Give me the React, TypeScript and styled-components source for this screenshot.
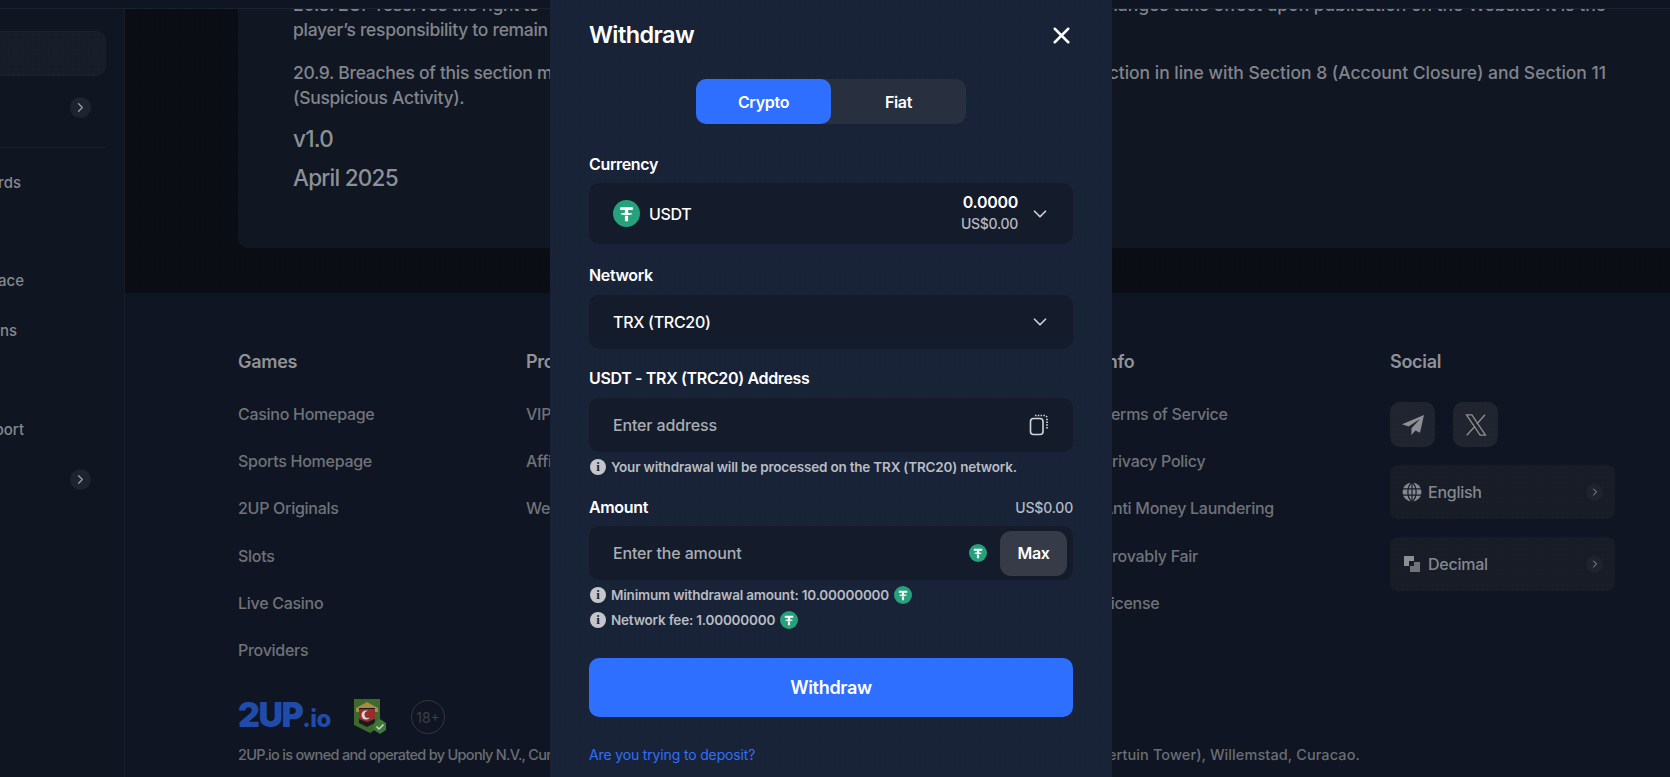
import React from 'react';
import styled, { createGlobalStyle } from 'styled-components';
import { ChevronDown, ChevronRight, X } from 'lucide-react';

const dots = (color: string) =>
  `radial-gradient(${color} 0.6px, transparent 0.8px) 0 0 / 5px 5px`;

const GlobalStyle = createGlobalStyle`
  * {
    box-sizing: border-box;
  }

  html,
  body {
    margin: 0;
    height: 100%;
    overflow: hidden;
    background: #0a0d14;
  }

  body {
    font-family: Inter, 'Noto Sans', 'Liberation Sans', sans-serif;
  }
`;

const PageStyle = styled.div`
  height: 777px;
  display: flex;
  flex-direction: column;
  overflow: hidden;
`;

const TopBar = styled.header`
  flex: 0 0 9px;
  background: #0f1522;
  border-bottom: 1px solid #1a2130;
  position: relative;
  z-index: 1;
`;

const Body = styled.div`
  flex: 1;
  min-height: 0;
  display: flex;
`;

const Sidebar = styled.aside`
  flex: 0 0 125px;
  background: #0f1521;
  border-right: 1px solid #171d2a;
  overflow: hidden;
  display: flex;
  flex-direction: column;
  padding-top: 22px;
`;

const SideButton = styled.div`
  width: 116px;
  height: 45px;
  flex: none;
  margin-left: -10px;
  border-radius: 10px;
  border: 1px solid #1a212d;
  background: ${dots('#1f2632')}, #161c28;
`;

const SideToggleRow = styled.div<{ $mt: number }>`
  height: 21px;
  flex: none;
  margin-top: ${(p) => p.$mt}px;
  padding-right: 33px;
  display: flex;
  justify-content: flex-end;
`;

const CircleChevron = styled.span<{ $size: number }>`
  width: ${(p) => p.$size}px;
  height: ${(p) => p.$size}px;
  flex: none;
  border-radius: 50%;
  background: #1e232d;
  color: #9b9ea5;
  display: flex;
  align-items: center;
  justify-content: center;
`;

const SideDivider = styled.div`
  width: 106px;
  height: 1px;
  flex: none;
  margin-top: 29px;
  background: #171d29;
`;

const SideText = styled.div<{ $end: number; $mt: number }>`
  width: ${(p) => p.$end}px;
  height: 20px;
  flex: none;
  margin-top: ${(p) => p.$mt}px;
  display: flex;
  justify-content: flex-end;
  white-space: nowrap;
  font-size: 15px;
  line-height: 20px;
  font-weight: 500;
  color: #85888e;
`;

const Main = styled.main`
  flex: 1;
  min-width: 0;
  display: flex;
  flex-direction: column;
  overflow: hidden;
`;

const ContentArea = styled.section`
  flex: 0 0 284px;
  padding-left: 113px;
  background: ${dots('#0d1119')}, #0a0d14;
`;

const Card = styled.article`
  height: 256px;
  margin-top: -17px;
  padding: 0 64px 0 55px;
  background: #101622;
  border-radius: 0 0 0 10px;
  overflow: hidden;
  color: #81858c;
`;

const Line = styled.div<{ $mt?: number }>`
  height: 25px;
  margin-top: ${(p) => p.$mt ?? 0}px;
  display: flex;
  justify-content: space-between;
  white-space: nowrap;
  font-size: 17.5px;
  line-height: 25px;
  font-weight: 500;
  letter-spacing: -0.3px;
`;

const LineEnd = styled.span`
  letter-spacing: -0.02px;
`;

const Version = styled.div<{ $mt: number }>`
  height: 30px;
  margin-top: ${(p) => p.$mt}px;
  font-size: 22.5px;
  line-height: 30px;
  font-weight: 500;
  letter-spacing: -0.75px;
  color: #8d9096;
`;

const Footer = styled.footer`
  flex: 1;
  padding: 57px 0 0 113px;
  background: #0f1522;
`;

const Columns = styled.div`
  display: grid;
  grid-template-columns: repeat(4, 288px) 225px;
  height: 320px;
`;

const ColumnTitle = styled.h4`
  margin: 0 0 28px;
  font-size: 18px;
  line-height: 24px;
  font-weight: 600;
  letter-spacing: -0.3px;
  color: #8f9297;
`;

const FooterLink = styled.div`
  height: 47.2px;
  font-size: 16px;
  line-height: 24px;
  font-weight: 500;
  letter-spacing: -0.28px;
  white-space: nowrap;
  color: #6f7379;
`;

const SocialRow = styled.div`
  display: flex;
  gap: 18px;
  margin-bottom: 18px;
`;

const SocialTile = styled.div`
  width: 45px;
  height: 45px;
  border-radius: 10px;
  background: ${dots('#262a34')}, #20242e;
  color: #8c8f93;
  display: flex;
  align-items: center;
  justify-content: center;
`;

const PrefRow = styled.div`
  height: 54px;
  margin-bottom: 18px;
  padding: 0 12px;
  border-radius: 8px;
  background: ${dots('#1c2230')}, #171c27;
  display: flex;
  align-items: center;
  gap: 6px;
  color: #85888e;
  font-size: 16px;
  font-weight: 500;
  letter-spacing: -0.25px;
`;

const PrefLabel = styled.span`
  flex: 1;
`;

const BrandRow = styled.div`
  display: flex;
  align-items: center;
  height: 36px;
  margin-top: 29px;
`;

const BrandLogo = styled.div`
  width: 116px;
  display: flex;
  align-items: baseline;
  color: #1f4bab;
  font-weight: 900;
  font-size: 34px;
  line-height: 36px;
  letter-spacing: -1.5px;

  small {
    font-size: 24px;
    font-weight: 800;
    letter-spacing: -0.5px;
  }
`;

const AgeBadge = styled.div`
  width: 34px;
  height: 34px;
  margin-left: 24px;
  border-radius: 50%;
  border: 1.5px solid #33373f;
  color: #3c4048;
  display: flex;
  align-items: center;
  justify-content: center;
  font-size: 14px;
`;

const LegalText = styled.div`
  margin-top: 8px;
  display: flex;
  width: 1122px;
  justify-content: space-between;
  white-space: nowrap;
  font-size: 14.5px;
  line-height: 24px;
  font-weight: 500;
  letter-spacing: -0.7px;
  color: #6a6e74;
`;

const LegalEnd = styled.span`
  letter-spacing: 0.1px;
`;

const Overlay = styled.div`
  position: fixed;
  inset: 0;
  z-index: 2;
  padding-right: 8px;
  display: flex;
  justify-content: center;
`;

const Modal = styled.div`
  width: 562px;
  height: 777px;
  padding: 0 39px;
  background: ${dots('#1c273e')}, #192338;
  color: #fff;
`;

const ModalHeader = styled.div`
  height: 70px;
  display: flex;
  align-items: center;
  justify-content: space-between;
`;

const ModalTitle = styled.h2`
  margin: 0;
  font-size: 23.5px;
  line-height: 30px;
  font-weight: 600;
  letter-spacing: -0.6px;
`;

const CloseIcon = styled(X)`
  margin-right: -2px;
`;

const Toggle = styled.div`
  width: 270px;
  height: 45px;
  margin: 9px auto 0;
  border-radius: 10px;
  background: #282f3e;
  display: flex;
`;

const ToggleButton = styled.div<{ $active?: boolean }>`
  flex: 1;
  border-radius: 10px;
  background: ${(p) => (p.$active ? '#2f6fff' : 'transparent')};
  display: flex;
  align-items: center;
  justify-content: center;
  font-size: 16px;
  font-weight: 600;
  letter-spacing: -0.3px;
`;

const FieldLabelRow = styled.div<{ $mt: number; $mb?: number }>`
  height: 20px;
  margin-top: ${(p) => p.$mt}px;
  margin-bottom: ${(p) => p.$mb ?? 10}px;
  display: flex;
  align-items: center;
  justify-content: space-between;
  font-size: 16px;
  font-weight: 600;
  letter-spacing: -0.35px;
`;

const LabelValue = styled.span`
  font-size: 14px;
  font-weight: 500;
  letter-spacing: -0.2px;
  color: #b5b9c0;
`;

const FieldBox = styled.div<{ $tall?: boolean }>`
  height: ${(p) => (p.$tall ? 61 : 54)}px;
  padding-left: 24px;
  padding-right: 24px;
  border-radius: 10px;
  background: #141b2a;
  display: flex;
  align-items: center;
  font-size: 16px;
  font-weight: 500;
  letter-spacing: -0.3px;
`;

const AmountBox = styled(FieldBox)`
  padding-right: 6px;
`;

const Grow = styled.span`
  flex: 1;
`;

const Placeholder = styled(Grow)`
  letter-spacing: -0.15px;
  color: #a9adb4;
`;

const CurrencyName = styled(Grow)`
  margin-left: 9px;
`;

const Balance = styled.div`
  margin-right: 11px;
  margin-top: -2px;
  text-align: right;
`;

const BalanceValue = styled.div`
  font-size: 16px;
  line-height: 22px;
  font-weight: 600;
`;

const BalanceFiat = styled.div`
  font-size: 14px;
  line-height: 22px;
  color: #b5b9c0;
`;

const Chevron = styled(ChevronDown)`
  flex: none;
  margin-right: -2px;
  color: #d2d4d8;
`;

const MaxButton = styled.div`
  width: 67px;
  height: 45px;
  margin-left: 13px;
  border-radius: 11px;
  background: #373b47;
  display: flex;
  align-items: center;
  justify-content: center;
  font-size: 16px;
  font-weight: 600;
`;

const Note = styled.div<{ $mt?: number }>`
  height: 25px;
  margin-top: ${(p) => p.$mt ?? 0}px;
  display: flex;
  align-items: center;
  gap: 5px;
  font-size: 13.5px;
  font-weight: 600;
  letter-spacing: -0.2px;
  color: #b8bcc3;
  white-space: nowrap;
`;

const InfoDot = styled.span`
  width: 16px;
  height: 16px;
  margin-left: 1px;
  border-radius: 50%;
  background: #c4c6cb;
  color: #192338;
  display: flex;
  align-items: center;
  justify-content: center;
  font-family: 'Liberation Serif', serif;
  font-size: 13px;
  font-weight: 700;
`;

const SubmitButton = styled.div`
  height: 59px;
  margin-top: 26px;
  border-radius: 10px;
  background: #2f6fff;
  display: flex;
  align-items: center;
  justify-content: center;
  font-size: 18px;
  font-weight: 600;
  letter-spacing: -0.3px;
`;

const DepositLink = styled.a`
  display: block;
  margin-top: 28px;
  font-size: 14px;
  line-height: 20px;
  font-weight: 400;
  letter-spacing: -0.15px;
  color: #2f6fff;
`;

const Tether = ({ size }: { size: number }) => (
  <svg width={size} height={size} viewBox="0 0 32 32" style={{ flex: 'none' }}>
    <circle cx="16" cy="16" r="16" fill="#26a17b" />
    <path
      d="M8.500 8.500h15v3.400h-5.600v3.100c2.900.2 5 .8 5 1.500s-2.100 1.300-5 1.500v7.200h-3.800v-7.200c-2.900-.2-5-.8-5-1.500s2.100-1.300 5-1.500v-3.100H8.500z"
      fill="#fff"
    />
    <path d="M7 16.600c1.500 1.200 5 1.800 9 1.800s7.500-.6 9-1.800" fill="none" stroke="#26a17b" strokeWidth="0.9" />
  </svg>
);

const CopyIcon = () => (
  <svg width="20" height="22" viewBox="0 0 20 22" fill="none" stroke="#d4d6da" style={{ flex: 'none' }}>
    <rect x="1.500" y="4.500" width="12.500" height="16" rx="3" strokeWidth="1.600" />
    <path d="M6 1.500h9.500c1.200 0 2.500 1 2.500 2.500v11" strokeWidth="1.700" strokeDasharray="1.500 1.300" />
  </svg>
);

const TelegramIcon = () => (
  <svg width="24" height="24" viewBox="0 0 24 24" fill="currentColor">
    <path d="M23 2 1 11.300l6.500 2.300L19 6 10.500 15.200 10.400 22l4-4.600 4.600 2.300z" />
  </svg>
);

const XLogo = () => (
  <svg width="24" height="24" viewBox="0 0 24 24" fill="none" stroke="currentColor" strokeWidth="1.300">
    <path d="M2.500 1.800h5.400l13.600 20.400h-5.400zM21 1.800l-8.200 9.200M11 13.300l-8.200 8.900" />
  </svg>
);

const GlobeIcon = () => (
  <svg width="20" height="20" viewBox="0 0 20 20" fill="none" style={{ flex: 'none' }}>
    <circle cx="10" cy="10" r="9.500" fill="#85888e" />
    <path d="M0 6.800h20M0 13.200h20M10 0v20M10 0C4.500 5 4.500 15 10 20M10 0c5.500 5 5.500 15 0 20" stroke="#171c27" strokeWidth="1.200" />
  </svg>
);

const OddsIcon = () => (
  <svg width="18" height="18" viewBox="0 0 18 18" style={{ flex: 'none', marginLeft: 1, marginRight: 1 }}>
    <path d="M1 1h10v5H6v5H1z" fill="#8b8e93" />
    <path d="M7 7h10v10H7z" fill="#6f7277" />
    <path d="M7 7h4v4H7z" fill="#171c27" />
  </svg>
);

const ShieldBadge = () => (
  <svg width="33" height="36" viewBox="0 0 33 36" style={{ flex: 'none' }}>
    <path d="M0 0h26v28l-10 6L0 26z" fill="#3d6a2c" />
    <path d="M13 3 24 9v4H2V9z" fill="#a98a45" />
    <path d="M5 9h16v15l-8 4-8-4z" fill="#1a1a1c" />
    <path d="M5 10h16v10l-8 3-8-3z" fill="#9a2c2c" />
    <circle cx="12" cy="16" r="4.500" fill="#d9d9d9" />
    <circle cx="14" cy="15.500" r="3.500" fill="#9a2c2c" />
    <path d="M32 24v7l-6 4-6-4v-7l6-4z" fill="#3d7a3a" />
    <path d="m22.500 27.500 2.500 2.500 4.500-4.500" fill="none" stroke="#cfd6cf" strokeWidth="1.500" />
  </svg>
);

const games = ['Casino Homepage', 'Sports Homepage', '2UP Originals', 'Slots', 'Live Casino', 'Providers'];
const promos = ['VIP Club', 'Affiliate', 'Welcome Bonus'];
const infoLinks = ['Terms of Service', 'Privacy Policy', 'Anti Money Laundering', 'Provably Fair', 'License'];

const App = () => {
  return (
    <PageStyle>
      <GlobalStyle />
      <TopBar />
      <Body>
        <Sidebar>
          <SideButton />
          <SideToggleRow $mt={21}>
            <CircleChevron $size={21}>
              <ChevronRight size={15} />
            </CircleChevron>
          </SideToggleRow>
          <SideDivider />
          <SideText $end={21} $mt={25}>Leaderboards</SideText>
          <SideText $end={24} $mt={78}>Marketplace</SideText>
          <SideText $end={17} $mt={30}>Promotions</SideText>
          <SideText $end={24} $mt={79}>Support</SideText>
          <SideToggleRow $mt={29}>
            <CircleChevron $size={21}>
              <ChevronRight size={15} />
            </CircleChevron>
          </SideToggleRow>
        </Sidebar>
        <Main>
          <ContentArea>
            <Card>
              <Line>
                <span>20.8. 2UP reserves the right to</span>
                <LineEnd>changes take effect upon publication on the Website. It is the</LineEnd>
              </Line>
              <Line>player’s responsibility to remain informed of any updates.</Line>
              <Line $mt={18}>
                <span>20.9. Breaches of this section may result in</span>
                <LineEnd>action in line with Section 8 (Account Closure) and Section 11</LineEnd>
              </Line>
              <Line>(Suspicious Activity).</Line>
              <Version $mt={14}>v1.0</Version>
              <Version $mt={9}>April 2025</Version>
            </Card>
          </ContentArea>
          <Footer>
            <Columns>
              <div>
                <ColumnTitle>Games</ColumnTitle>
                {games.map((g) => (
                  <FooterLink key={g}>{g}</FooterLink>
                ))}
              </div>
              <div>
                <ColumnTitle>Promotions</ColumnTitle>
                {promos.map((g) => (
                  <FooterLink key={g}>{g}</FooterLink>
                ))}
              </div>
              <div />
              <div>
                <ColumnTitle>Info</ColumnTitle>
                {infoLinks.map((g) => (
                  <FooterLink key={g}>{g}</FooterLink>
                ))}
              </div>
              <div>
                <ColumnTitle>Social</ColumnTitle>
                <SocialRow>
                  <SocialTile>
                    <TelegramIcon />
                  </SocialTile>
                  <SocialTile>
                    <XLogo />
                  </SocialTile>
                </SocialRow>
                <PrefRow>
                  <GlobeIcon />
                  <PrefLabel>English</PrefLabel>
                  <CircleChevron $size={17}>
                    <ChevronRight size={12} />
                  </CircleChevron>
                </PrefRow>
                <PrefRow>
                  <OddsIcon />
                  <PrefLabel>Decimal</PrefLabel>
                  <CircleChevron $size={17}>
                    <ChevronRight size={12} />
                  </CircleChevron>
                </PrefRow>
              </div>
            </Columns>
            <BrandRow>
              <BrandLogo>
                2UP<small>.io</small>
              </BrandLogo>
              <ShieldBadge />
              <AgeBadge>18+</AgeBadge>
            </BrandRow>
            <LegalText>
              <span>2UP.io is owned and operated by Uponly N.V., Curacao</span>
              <LegalEnd>Zuikertuin Tower), Willemstad, Curacao.</LegalEnd>
            </LegalText>
          </Footer>
        </Main>
      </Body>
      <Overlay>
        <Modal>
          <ModalHeader>
            <ModalTitle>Withdraw</ModalTitle>
            <CloseIcon size={27} strokeWidth={2.2} />
          </ModalHeader>
          <Toggle>
            <ToggleButton $active>Crypto</ToggleButton>
            <ToggleButton>Fiat</ToggleButton>
          </Toggle>
          <FieldLabelRow $mt={30} $mb={9}>Currency</FieldLabelRow>
          <FieldBox $tall>
            <Tether size={27} />
            <CurrencyName>USDT</CurrencyName>
            <Balance>
              <BalanceValue>0.0000</BalanceValue>
              <BalanceFiat>US$0.00</BalanceFiat>
            </Balance>
            <Chevron size={22} strokeWidth={1.8} />
          </FieldBox>
          <FieldLabelRow $mt={21}>Network</FieldLabelRow>
          <FieldBox>
            <Grow>TRX (TRC20)</Grow>
            <Chevron size={22} strokeWidth={1.8} />
          </FieldBox>
          <FieldLabelRow $mt={19}>USDT - TRX (TRC20) Address</FieldLabelRow>
          <FieldBox>
            <Placeholder>Enter address</Placeholder>
            <CopyIcon />
          </FieldBox>
          <Note $mt={2}>
            <InfoDot>i</InfoDot>
            Your withdrawal will be processed on the TRX (TRC20) network.
          </Note>
          <FieldLabelRow $mt={18} $mb={9}>
            Amount
            <LabelValue>US$0.00</LabelValue>
          </FieldLabelRow>
          <AmountBox>
            <Placeholder>Enter the amount</Placeholder>
            <Tether size={18} />
            <MaxButton>Max</MaxButton>
          </AmountBox>
          <Note $mt={2}>
            <InfoDot>i</InfoDot>
            Minimum withdrawal amount: 10.00000000
            <Tether size={18} />
          </Note>
          <Note>
            <InfoDot>i</InfoDot>
            Network fee: 1.00000000
            <Tether size={18} />
          </Note>
          <SubmitButton>Withdraw</SubmitButton>
          <DepositLink>Are you trying to deposit?</DepositLink>
        </Modal>
      </Overlay>
    </PageStyle>
  );
};

export default App;
